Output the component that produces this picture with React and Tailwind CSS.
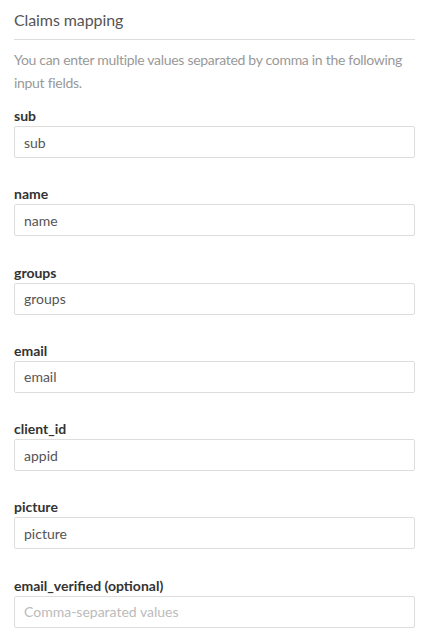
export default function App() {
  const fields = [
    { label: 'sub', value: 'sub' },
    { label: 'name', value: 'name' },
    { label: 'groups', value: 'groups' },
    { label: 'email', value: 'email' },
    { label: 'client_id', value: 'appid' },
    { label: 'picture', value: 'picture' },
    { label: 'email_verified (optional)', value: '', placeholder: 'Comma-separated values' }
  ];

  return (
    <div className="bg-white px-[14px] pt-[8px] font-['Lato',sans-serif] text-[#333]">
      <div className="w-[401px]">
        {/* Section header */}
        <h3 className="text-[16px] leading-[24px] tracking-[-0.1px] text-[#555] pb-[7px] border-b border-[#ddd]">
          Claims mapping
        </h3>
        <p className="mt-[8px] text-[14px] leading-[23px] tracking-[-0.3px] text-[#999]">
          You can enter multiple values separated by comma in the following input fields.
        </p>

        {/* Fields */}
        <div className="mt-[12px]">
          {fields.map((f) => (
            <div key={f.label} className="mb-[26.3px]">
              <label className="block text-[14px] font-bold leading-[20px] text-[#333]">
                {f.label}
              </label>
              <input
                type="text"
                defaultValue={f.value}
                placeholder={f.placeholder}
                className="block w-full h-[32px] px-[9px] border border-[#ddd] rounded-[2px] text-[14px] text-[#555] placeholder:text-[#bbb] outline-none"
              />
            </div>
          ))}
        </div>
      </div>
    </div>
  );
}
